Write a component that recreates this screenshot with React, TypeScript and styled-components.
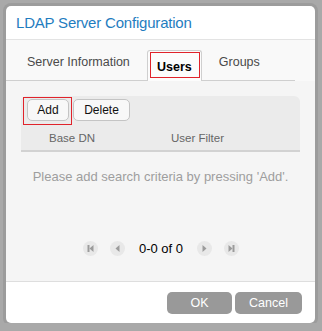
import React from 'react';
import styled, { createGlobalStyle, css } from 'styled-components';

const GlobalStyle = createGlobalStyle`
  html, body {
    margin: 0;
    padding: 0;
    background: #a9a9a9;
    font-family: 'Liberation Sans', Arial, sans-serif;
  }
`;

const focusRing = (inset: string) => css`
  position: relative;
  &::after {
    content: '';
    position: absolute;
    inset: ${inset};
    border: 1px solid #e0232b;
    pointer-events: none;
  }
`;

const Page = styled.div`
  padding: 6px 0 0 6px;
`;

const Dialog = styled.div`
  width: 309px;
  height: 317px;
  background: #ffffff;
  border-radius: 5px;
  box-shadow: 0 0 0 3px #9c9c9c;
  display: flex;
  flex-direction: column;
  overflow: hidden;
`;

const Header = styled.div`
  height: 33px;
  padding-left: 10px;
  display: flex;
  align-items: center;
  border-bottom: 1px solid #e3e3e3;
  color: #1f7dc0;
  font-size: 15px;
  letter-spacing: -0.2px;
`;

const Body = styled.div`
  flex: 1;
  background: #f5f5f5;
  display: flex;
  flex-direction: column;
`;

const TabBar = styled.div`
  background: #f9f9f9;
  padding-top: 10px;
`;

const TabList = styled.div`
  display: flex;
  align-items: flex-end;
  gap: 7px;
  padding-left: 11px;
  margin-right: 20px;
  height: 30px;
  border-bottom: 1px solid #cfcfcf;
`;

const Tab = styled.div<{ active?: boolean }>`
  box-sizing: border-box;
  display: flex;
  align-items: center;
  justify-content: center;
  height: 24px;
  padding: 0 10px;
  margin-bottom: 6px;
  font-size: 12.5px;
  color: #4a4a4a;
  ${({ active }) =>
    active &&
    css`
      height: 31px;
      min-width: 55px;
      padding: 2px 9px 0;
      margin-bottom: -1px;
      font-weight: bold;
      color: #000;
      background: #fcfcfc;
      border: 1px solid #cfcfcf;
      border-bottom: none;
      border-radius: 3px 3px 0 0;
      ${focusRing('1px 1px 3px 2px')}
    `}
`;

const Content = styled.div`
  flex: 1;
  padding: 15px 15px 0 15px;
  display: flex;
  flex-direction: column;
`;

const Panel = styled.div`
  background: #ebebeb;
  border-radius: 6px 6px 0 0;
  border-bottom: 2px solid #d2d2d2;
`;

const Toolbar = styled.div`
  display: flex;
  gap: 4px;
  padding: 3px 6px 0 6px;
`;

const ToolButton = styled.button<{ focused?: boolean; w: number }>`
  width: ${({ w }) => w}px;
  height: 22px;
  padding: 0;
  font-family: inherit;
  font-size: 12px;
  color: #111;
  background: #f8f8f8;
  border: 1px solid #c4c4c4;
  border-radius: 5px;
  outline: none;
  ${({ focused }) => focused && focusRing('-3px -4px -5px -5px')}
`;

const HeaderRow = styled.div`
  display: grid;
  grid-template-columns: 122px 1fr;
  padding: 5px 0 0 28px;
  height: 29px;
  box-sizing: border-box;
  align-items: center;
  font-size: 11.5px;
  color: #666;
`;

const Empty = styled.div`
  text-align: center;
  font-size: 13px;
  color: #9e9e9e;
  margin-top: 17px;
`;

const Pager = styled.div`
  margin-top: auto;
  margin-bottom: 25px;
  display: flex;
  align-items: center;
  justify-content: center;
  gap: 12px;
  padding-left: 1px;
`;

const PagerButton = styled.span`
  width: 15px;
  height: 15px;
  border-radius: 50%;
  background: #e8e8e8;
  display: flex;
  align-items: center;
  justify-content: center;
`;

const PagerText = styled.span`
  font-size: 13px;
  color: #000;
  margin: 0 2px;
`;

const Footer = styled.div`
  height: 42px;
  border-top: 1px solid #dedede;
  display: flex;
  justify-content: flex-end;
  align-items: flex-start;
  gap: 3px;
  padding: 10px 13px 0 0;
  box-sizing: border-box;
`;

const FooterButton = styled.button<{ w: number }>`
  width: ${({ w }) => w}px;
  height: 22px;
  padding: 0;
  border: none;
  border-radius: 5px;
  background: #999999;
  color: #fff;
  font-family: inherit;
  font-size: 12.5px;
`;

type Dir = 'first' | 'prev' | 'next' | 'last';

const PagerIcon = ({ dir }: { dir: Dir }) => {
  const left = dir === 'first' || dir === 'prev';
  const bar = dir === 'first' || dir === 'last';
  return (
    <PagerButton>
      <svg width="9" height="9" viewBox="0 0 9 9">
        {left ? (
          <polygon points={bar ? '7.5,1 3.5,4.5 7.5,8' : '6.5,1 2.5,4.5 6.5,8'} fill="#9b9b9b" />
        ) : (
          <polygon points={bar ? '1.5,1 5.5,4.5 1.5,8' : '2.5,1 6.5,4.5 2.5,8'} fill="#9b9b9b" />
        )}
        {bar && <rect x={left ? 1.5 : 5.5} y="1" width="2" height="7" fill="#9b9b9b" />}
      </svg>
    </PagerButton>
  );
};

const App: React.FC = () => {
  return (
    <Page>
      <GlobalStyle />
      <Dialog>
        <Header>LDAP Server Configuration</Header>
        <Body>
          <TabBar>
            <TabList>
              <Tab>Server Information</Tab>
              <Tab active>Users</Tab>
              <Tab>Groups</Tab>
            </TabList>
          </TabBar>
          <Content>
            <Panel>
              <Toolbar>
                <ToolButton focused w={42}>Add</ToolButton>
                <ToolButton w={57}>Delete</ToolButton>
              </Toolbar>
              <HeaderRow>
                <span>Base DN</span>
                <span>User Filter</span>
              </HeaderRow>
            </Panel>
            <Empty>Please add search criteria by pressing 'Add'.</Empty>
            <Pager>
              <PagerIcon dir="first" />
              <PagerIcon dir="prev" />
              <PagerText>0-0 of 0</PagerText>
              <PagerIcon dir="next" />
              <PagerIcon dir="last" />
            </Pager>
          </Content>
        </Body>
        <Footer>
          <FooterButton w={65}>OK</FooterButton>
          <FooterButton w={67}>Cancel</FooterButton>
        </Footer>
      </Dialog>
    </Page>
  );
};

export default App;
